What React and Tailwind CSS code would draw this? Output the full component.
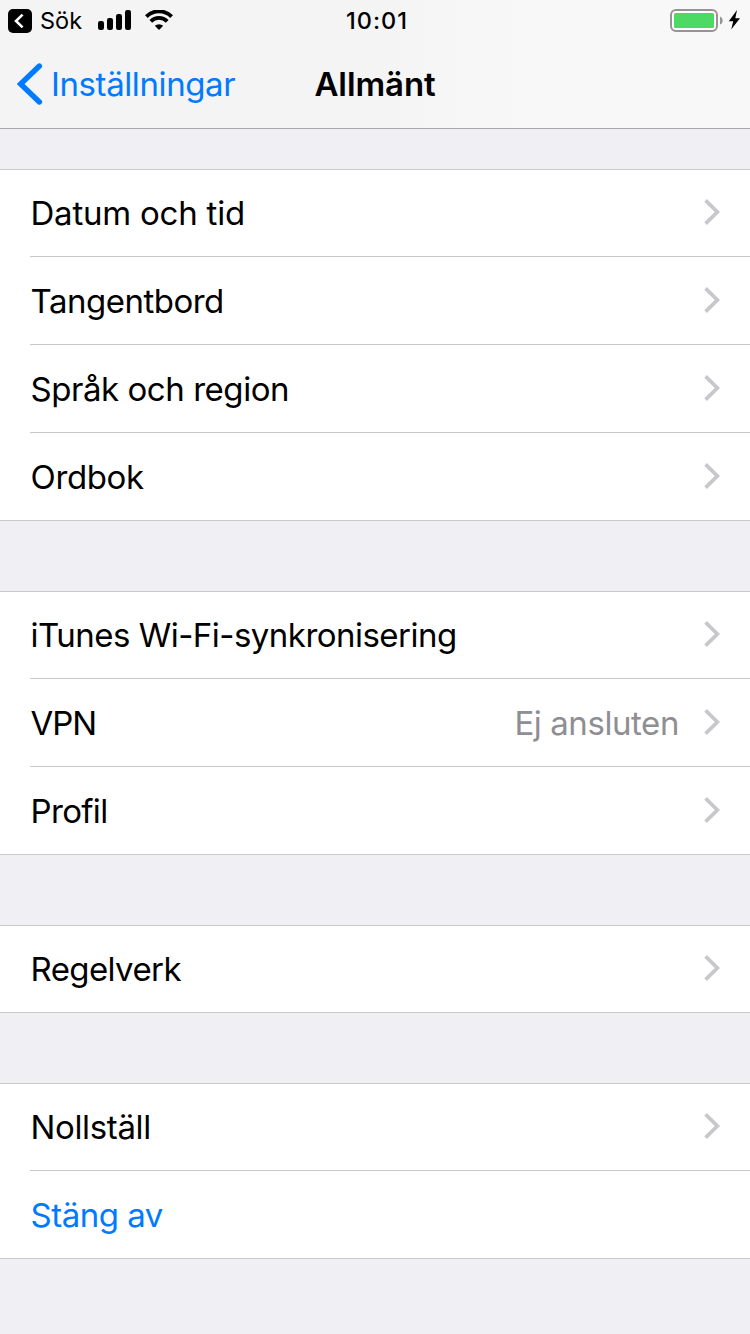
const groups = [
  {
    id: "locale",
    rows: [
      { label: "Datum och tid", tracking: "tracking-[-0.22px]" },
      { label: "Tangentbord", tracking: "tracking-[-0.5px]" },
      { label: "Språk och region", tracking: "tracking-[-0.45px]" },
      { label: "Ordbok", tracking: "tracking-[-0.35px]" },
    ],
  },
  {
    id: "network",
    rows: [
      { label: "iTunes Wi-Fi-synkronisering", tracking: "tracking-[-0.52px]" },
      { label: "VPN", value: "Ej ansluten", tracking: "tracking-[-1px]" },
      { label: "Profil", tracking: "tracking-[-0.65px]" },
    ],
  },
  {
    id: "legal",
    rows: [{ label: "Regelverk", tracking: "tracking-[-0.6px]" }],
  },
  {
    id: "reset",
    rows: [
      { label: "Nollställ", tracking: "tracking-[-0.35px]" },
      { label: "Stäng av", action: true, tracking: "tracking-[-0.5px]" },
    ],
  },
];

function Chevron() {
  return (
    <svg width="16" height="28" viewBox="0 0 16 28" fill="none" className="mb-0.5 shrink-0">
      <path d="M1.6 2.4 L13.4 14 L1.6 25.6" stroke="#c7c7cc" strokeWidth="3.8" />
    </svg>
  );
}

function Signal() {
  return (
    <svg width="34" height="20" viewBox="0 0 34 20" className="shrink-0">
      <rect x="0" y="11" width="6" height="9" rx="2.2" />
      <rect x="9" y="8" width="6" height="12" rx="2.2" />
      <rect x="18" y="4" width="6" height="16" rx="2.2" />
      <rect x="27" y="0" width="6" height="20" rx="2.2" />
    </svg>
  );
}

function Wifi() {
  return (
    <svg width="28" height="20" viewBox="0 0 28 20" fill="none" className="shrink-0">
      <path d="M1.4 6.6 A17.8 17.8 0 0 1 26.6 6.6" stroke="#000" strokeWidth="4" />
      <path d="M5.8 11.3 A11.6 11.6 0 0 1 22.2 11.3" stroke="#000" strokeWidth="3.8" />
      <path d="M14 20 L9.8 15.8 A6.2 6.2 0 0 1 18.2 15.8 Z" fill="#000" />
    </svg>
  );
}

function Battery() {
  return (
    <svg width="70" height="24" viewBox="0 0 70 24" className="mt-0.5 shrink-0">
      <rect x="1" y="1" width="46" height="21" rx="5" fill="#fff" stroke="#959595" strokeWidth="2" />
      <rect x="4" y="4" width="40" height="15" rx="1.6" fill="#4cd964" />
      <path d="M50 7.4 C53.6 9 53.6 14 50 15.6 Z" fill="#959595" />
      <path d="M67 1 L58.8 12.3 H63.2 L61.2 20.6 L70 9.2 H65.3 Z" fill="#000" />
    </svg>
  );
}

function StatusBar() {
  return (
    <div className="grid h-10 grid-cols-3 items-center">
      <div className="flex items-center pl-2">
        <svg width="24" height="24" viewBox="0 0 24 24" fill="none" className="mt-0.5 shrink-0">
          <rect width="24" height="24" rx="5" fill="#000" />
          <path d="M14.6 5.6 L8 12 L14.6 18.4" stroke="#fff" strokeWidth="2.6" />
        </svg>
        <span className="ml-2 w-[50px] pt-0.5 text-[23.5px] leading-[38px]">Sök</span>
        <div className="ml-2 flex items-center gap-[13px]">
          <Signal />
          <Wifi />
        </div>
      </div>
      <span className="pt-0.5 pl-1 text-center text-[23.5px] leading-[38px] font-medium tracking-[1px]">10:01</span>
      <div className="flex justify-end pr-[10px]">
        <Battery />
      </div>
    </div>
  );
}

function NavBar() {
  return (
    <div className="grid h-22 grid-cols-3 items-center">
      <button className="flex items-center pl-[17px] whitespace-nowrap text-[#007aff]">
        <svg width="26" height="42" viewBox="0 0 26 42" fill="none" className="shrink-0">
          <path d="M22.4 3 L3.6 21 L22.4 39" stroke="#007aff" strokeWidth="5.4" strokeLinecap="round" />
        </svg>
        <span className="ml-2 text-[33px] leading-[44px] tracking-[-0.4px]">Inställningar</span>
      </button>
      <h1 className="text-center text-[33px] leading-[44px] font-semibold tracking-[-0.1px]">Allmänt</h1>
    </div>
  );
}

function Row({ row, last }) {
  return (
    <li
      className={
        last
          ? "flex h-22 border-b border-[#c8c7cc] pl-[30px] first:h-[87px]"
          : "flex h-22 pl-[30px] first:h-[87px]"
      }
    >
      <div
        className={
          last
            ? "flex flex-1 items-center pr-[30px]"
            : "flex flex-1 items-center border-b border-[#c8c7cc] pr-[30px]"
        }
      >
        <span
          className={`flex-1 pl-[0.5px] text-[33px] leading-[44px] ${row.tracking} ${row.action ? "text-[#007aff]" : "text-black"}`}
        >
          {row.label}
        </span>
        {row.value && (
          <span className="mr-[25px] text-[33px] leading-[44px] tracking-[-0.43px] text-[#8e8e93]">{row.value}</span>
        )}
        {!row.action && <Chevron />}
      </div>
    </li>
  );
}

export default function App() {
  return (
    <div className="h-[1334px] w-[750px] overflow-hidden bg-[#efeff4] font-['Inter',sans-serif] text-black">
      <header className="border-b border-[#a7a7aa] bg-linear-to-r from-[#f4f4f4] from-50% to-[#f8f8f8] to-70%">
        <StatusBar />
        <NavBar />
      </header>

      <main className="flex flex-col gap-[70px] pt-10">
        {groups.map((group) => (
          <ul key={group.id} className="border-t border-[#c8c7cc] bg-white">
            {group.rows.map((row, i) => (
              <Row key={row.label} row={row} last={i === group.rows.length - 1} />
            ))}
          </ul>
        ))}
      </main>
    </div>
  );
}
